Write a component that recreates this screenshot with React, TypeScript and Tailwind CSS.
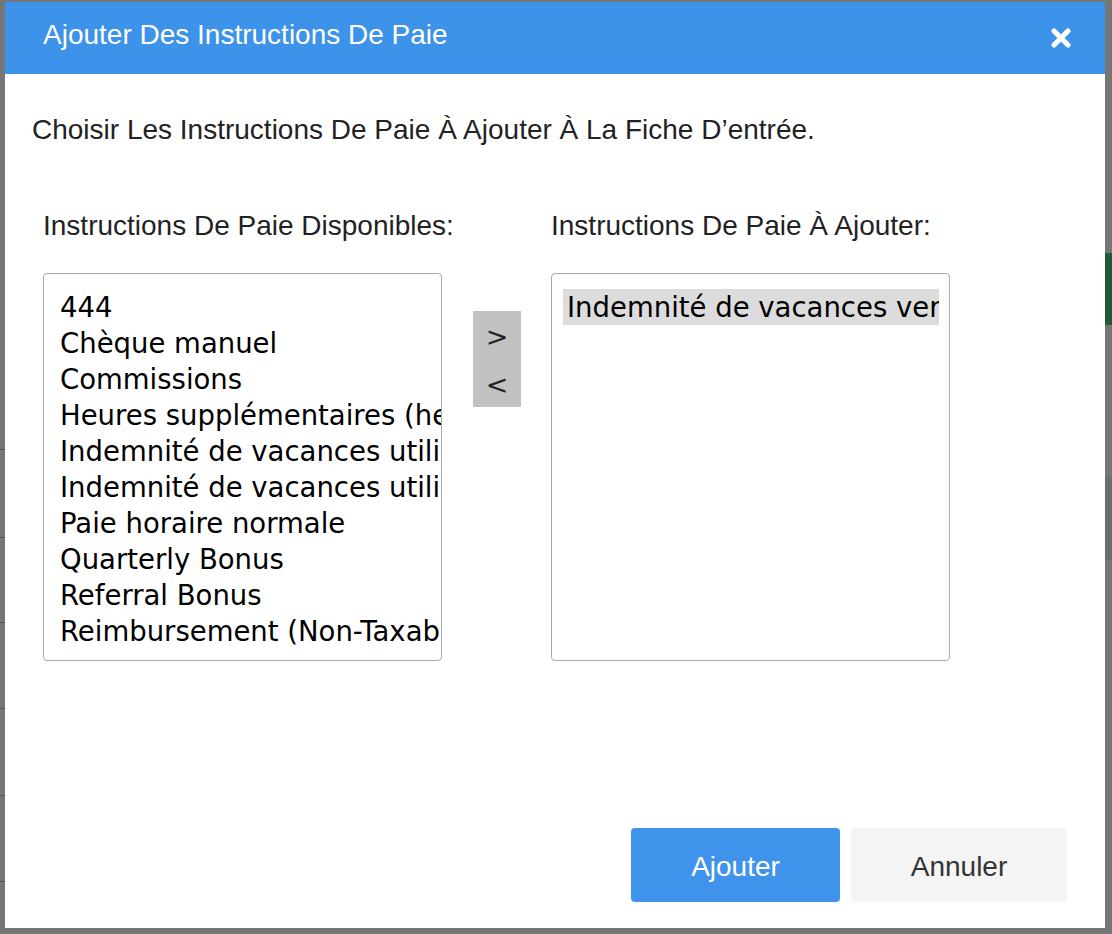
import React from "react";

const available = [
  "444",
  "Chèque manuel",
  "Commissions",
  "Heures supplémentaires (heures)",
  "Indemnité de vacances utilisée (heures)",
  "Indemnité de vacances utilisée (montant)",
  "Paie horaire normale",
  "Quarterly Bonus",
  "Referral Bonus",
  "Reimbursement (Non-Taxable)",
];

const sans = { fontFamily: '"Liberation Sans", Arial, Helvetica, sans-serif' };
const verdana = { fontFamily: '"DejaVu Sans", Verdana, sans-serif' };

export default function App() {
  return (
    <div className="relative w-[1112px] h-[934px] overflow-hidden bg-[#767676]" style={sans}>
      {/* dimmed page behind the dialog */}
      <div className="absolute right-0 top-[253px] w-[8px] h-[72px] bg-[#1f5a36]" />
      <div className="absolute right-0 top-[477px] w-[8px] h-[83px] bg-[#68706a]" />
      <div className="absolute left-0 top-[449px] w-[6px] h-[1px] bg-[#555]" />
      <div className="absolute left-0 top-[537px] w-[6px] h-[1px] bg-[#555]" />
      <div className="absolute left-0 top-[622px] w-[6px] h-[1px] bg-[#555]" />
      <div className="absolute left-0 top-[708px] w-[6px] h-[1px] bg-[#555]" />
      <div className="absolute left-0 top-[795px] w-[6px] h-[1px] bg-[#555]" />
      <div className="absolute left-0 top-[881px] w-[6px] h-[1px] bg-[#555]" />

      {/* dialog */}
      <div className="absolute left-[5px] top-[2px] w-[1100px] h-[926px] bg-white flex flex-col">
        <div className="h-[72px] shrink-0 bg-[#3d92e9] flex items-center justify-between pl-[38px] pr-[33px]">
          <div className="text-white text-[28px] leading-8 pb-[6px]">Ajouter Des Instructions De Paie</div>
          <svg width="22" height="22" viewBox="0 0 22 22" className="mb-[1px]">
            <path d="M4 4 L18 18 M18 4 L4 18" stroke="#ffffff" strokeWidth="5.2" strokeLinecap="round" />
          </svg>
        </div>

        <div className="pt-[40px] pl-[27px] text-[28px] leading-8 text-[#222]">
          Choisir Les Instructions De Paie À Ajouter À La Fiche D’entrée.
        </div>

        <div className="mt-[64px] pl-[38px] flex gap-[30px] items-start">
          <div className="w-[399px] flex flex-col">
            <div className="text-[28px] leading-8 text-[#222] whitespace-nowrap">Instructions De Paie Disponibles:</div>
            <div className="mt-[31px] h-[388px] border border-[#a9a9a9] rounded-[4px] pt-[15px] pl-[12px] overflow-hidden" style={verdana}>
              {available.map((t, i) => (
                <div key={i} className="px-[4px] text-[27.5px] leading-[36px] text-black whitespace-nowrap">
                  {t}
                </div>
              ))}
            </div>
          </div>

          <div className="mt-[101px] ml-[1px] w-[48px] h-[96px] bg-[#c1c1c1] flex flex-col text-[#222] text-[27px]" style={verdana}>
            <div className="h-[48px] flex items-center justify-center pt-[4px]">&gt;</div>
            <div className="h-[48px] flex items-center justify-center pt-[4px]">&lt;</div>
          </div>

          <div className="w-[399px] flex flex-col">
            <div className="text-[28px] leading-8 text-[#222] whitespace-nowrap">Instructions De Paie À Ajouter:</div>
            <div className="mt-[31px] h-[388px] border border-[#a9a9a9] rounded-[4px] pt-[15px] pl-[11px] overflow-hidden" style={verdana}>
              <div className="w-[376px] overflow-hidden bg-[#dcdcdc] px-[4px] text-[27.5px] leading-[36px] text-black whitespace-nowrap">
                Indemnité de vacances versée (montant)
              </div>
            </div>
          </div>
        </div>

        <div className="mt-auto flex justify-end gap-[11px] pr-[38px] pb-[26px]">
          <button className="w-[209px] h-[74px] rounded-[4px] bg-[#3f93ea] text-white text-[28px] pt-[3px]" style={sans}>
            Ajouter
          </button>
          <button className="w-[216px] h-[74px] rounded-[4px] bg-[#f4f4f4] text-[#333] text-[28px] pt-[3px]" style={sans}>
            Annuler
          </button>
        </div>
      </div>
    </div>
  );
}
